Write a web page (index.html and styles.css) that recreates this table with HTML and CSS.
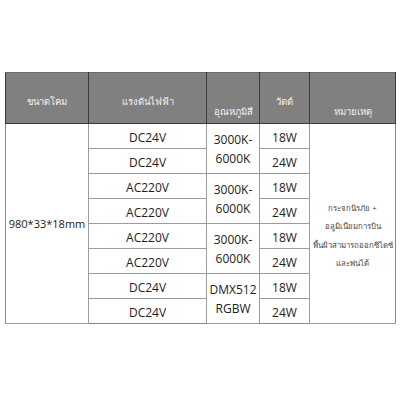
FILE: index.html
```html
<!DOCTYPE html>
<html>
<head>
<meta charset="utf-8">
<link rel="stylesheet" href="styles.css">
</head>
<body>
<table class="spec">
  <colgroup>
    <col class="c1"><col class="c2"><col class="c3"><col class="c4"><col class="c5">
  </colgroup>
  <thead>
    <tr class="head">
      <th><span class="hup">ขนาดโคม</span></th>
      <th><span class="hup">แรงดันไฟฟ้า</span></th>
      <th><span class="hdown">อุณหภูมิสี</span></th>
      <th><span class="hup">วัตต์</span></th>
      <th><span class="hdown">หมายเหตุ</span></th>
    </tr>
  </thead>
  <tbody>
    <tr>
      <td rowspan="8" class="size">980*33*18mm</td>
      <td>DC24V</td>
      <td rowspan="2" class="temp">3000K-<br>6000K</td>
      <td>18W</td>
      <td rowspan="8" class="note">กระจกนิรภัย +<br>อลูมิเนียมการบิน<br>พื้นผิวสามารถออกซิไดซ์<br>และพ่นได้</td>
    </tr>
    <tr><td>DC24V</td><td>24W</td></tr>
    <tr><td>AC220V</td><td rowspan="2" class="temp">3000K-<br>6000K</td><td>18W</td></tr>
    <tr><td>AC220V</td><td>24W</td></tr>
    <tr><td>AC220V</td><td rowspan="2" class="temp">3000K-<br>6000K</td><td>18W</td></tr>
    <tr><td>AC220V</td><td>24W</td></tr>
    <tr><td>DC24V</td><td rowspan="2" class="temp">DMX512<br>RGBW</td><td>18W</td></tr>
    <tr><td>DC24V</td><td>24W</td></tr>
  </tbody>
</table>
</body>
</html>
```

FILE: styles.css
```css
html, body {
  margin: 0;
  padding: 0;
  background: #ffffff;
}
body {
  padding: 72px 0 0 5px;
  font-family: "Open Sans", "Noto Sans", sans-serif;
  color: #222;
}
.spec {
  border-collapse: collapse;
  table-layout: fixed;
  width: 390px;
}
.c1 { width: 83px; }
.c2 { width: 118px; }
.c3 { width: 53px; }
.c4 { width: 50px; }
.c5 { width: 86px; }

.spec th {
  background: #808080;
  color: #f4f4f4;
  font-weight: normal;
  font-size: 9.5px;
  height: 50px;
  padding: 0;
  border: 1px solid #3a3a3a;
  border-top-color: #6a6a6a;
  vertical-align: top;
}
.hup {
  display: block;
  padding-top: 21px;
}
.hdown {
  display: block;
  padding-top: 31px;
}
.spec tbody tr {
  height: 25px;
}
.spec td {
  border: 1px solid #9c9c9c;
  height: 18px;
  padding: 4px 0 0;
  text-align: center;
  vertical-align: middle;
  font-size: 12px;
  line-height: 16px;
}
.spec td.size {
  font-size: 11px;
  white-space: nowrap;
  border-left-color: #888;
  padding-top: 0;
}
.spec td.temp {
  line-height: 19px;
  padding-top: 1px;
}
.spec td.note {
  font-size: 7.8px;
  line-height: 18.5px;
  color: #444;
  white-space: nowrap;
  padding-top: 24px;
  border-right-color: #888;
}
tbody tr:last-child td {
  border-bottom-color: #888;
}
```
